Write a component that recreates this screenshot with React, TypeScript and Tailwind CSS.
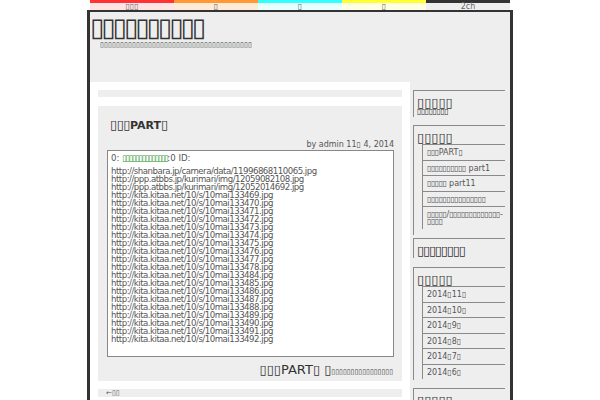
import React from 'react';

const T = (n: number) => '▯'.repeat(n);

const navItems = [
  { label: T(3), bar: 'border-[#ff3333]', bg: 'bg-[#ffe4e4]' },
  { label: T(1), bar: 'border-[#ff9933]', bg: 'bg-[#ffead8]' },
  { label: T(1), bar: 'border-[#33ffff]', bg: 'bg-[#e8ffff]' },
  { label: T(1), bar: 'border-[#ffff33]', bg: 'bg-[#ffffe4]' },
  { label: '2ch', bar: 'border-[#333333]', bg: 'bg-[#eeeeee]' },
];

const urls = [
  'http://shanbara.jp/camera/data/11996868110065.jpg',
  'http://ppp.atbbs.jp/kurimari/img/12059082108.jpg',
  'http://ppp.atbbs.jp/kurimari/img/12052014692.jpg',
  ...['469', '470', '471', '472', '473', '474', '475', '476', '477', '478', '484', '485', '486', '487', '488', '489', '490', '491', '492'].map(
    (n) => `http://kita.kitaa.net/10/s/10mai133${n}.jpg`
  ),
];

// small tofu-like run, squeezed to the width of the reference glyphs
const Tf = ({ n }: { n: number }) => <span className="tracking-[-0.5px]">{T(n)}</span>;

const recent: React.ReactNode[] = [
  <><Tf n={3} />PART<Tf n={1} /></>,
  <><Tf n={10} /> part1</>,
  <><Tf n={5} /> part11</>,
  <Tf n={15} />,
  <span className="break-all"><Tf n={5} />/<Tf n={13} />-<Tf n={4} /></span>,
];

const archives = ['2014▯11▯', '2014▯10▯', '2014▯9▯', '2014▯8▯', '2014▯7▯', '2014▯6▯'];

const Widget = ({ title, height, gap, narrow, children }: { title: string; height: string; gap: string; narrow?: boolean; children?: React.ReactNode }) => (
  <div className={`${height} ${gap} border-l border-t border-[#8a8a8a] pl-[3px]`}>
    <h3 className={`pt-[5px] text-[13px] leading-[13px] text-[#333] ${narrow ? 'tracking-[-1.2px]' : ''}`}>{title}</h3>
    {children}
  </div>
);

const WidgetList = ({ items }: { items: React.ReactNode[] }) => (
  <ul className="ml-[5px] border-l border-[#8a8a8a]">
    {items.map((it, i) => (
      <li key={i} className="border-t border-[#8a8a8a] pb-[3.5px] pl-[4px] pt-[4px] text-[8px] leading-[7px] text-[#555]">
        {it}
      </li>
    ))}
  </ul>
);

export default function App() {
  return (
    <div className="min-h-screen bg-white font-['DejaVu_Sans',sans-serif]">
      <div className="mx-auto w-[426px]">
        <nav className="mx-[3px] grid grid-cols-5">
          {navItems.map((n, i) => (
            <div key={i} className={`border-t-[3px] ${n.bar} ${n.bg} h-[10px] text-center text-[8px] leading-[7px] text-[#666]`}>
              {n.label}
            </div>
          ))}
        </nav>
        <div className="h-[390px] overflow-hidden border-x-[3px] border-t-2 border-[#333] bg-[#eeeeee]">
          <header className="h-[70px]">
            <h1 className="pt-[2px] text-[26px] leading-[26px] tracking-[-3px] text-[#333]">{T(10)}</h1>
            <p className="ml-[10px] mt-[1px] text-[7px] font-bold leading-[8px] tracking-[0.15px] text-[#333]">{T(38)}</p>
          </header>
          <div className="flex">
            <main className="w-[320px] bg-white px-[8px] pt-[8px]">
              <div className="h-[7px] bg-[#eeeeee]" />
              <article className="mt-[9px] bg-[#eeeeee] pb-[5px] pl-[9px] pr-[8px] pt-[12px]">
                <h2 className="pl-[3px] text-[13px] font-bold leading-[13px] text-[#333]">
                  <span className="tracking-[-0.5px]">{T(3)}</span>
                  <span className="text-[11px]">PART</span>
                  <span>{T(1)}</span>
                </h2>
                <div className="mt-[8.5px] text-right text-[8px] leading-[8px] text-[#555]">by admin 11▯ 4, 2014</div>
                <div className="mt-[1.5px] h-[207px] border border-[#888] bg-white px-[3px] pt-[3px] text-[8.6px] leading-[8px] text-[#555]">
                  <div>
                    0: <span className="tracking-[-1.5px] text-[#2f9a2f]">{T(14)}</span>:0 ID:
                  </div>
                  <div className="mt-[5px] tracking-[-0.5px]">
                    {urls.map((u) => (
                      <div key={u}>{u}</div>
                    ))}
                  </div>
                </div>
                <div className="mt-[6px] h-[13px] pr-[1px] text-right text-[13px] leading-[13px] text-[#333]">
                  <span>{T(3)}PART{T(1)} {T(1)}</span>
                  <span className="text-[7px]">{T(16)}</span>
                </div>
              </article>
              <div className="mt-[8px] h-[8px] bg-[#eeeeee] pl-[8px] text-[7px] leading-[8px] text-[#555]">←{T(2)}</div>
            </main>
            <aside className="ml-[3px] mr-[5px] flex-1 pt-[8px]">
              <Widget title={T(5)} height="h-[27px]" gap="mb-[8px]">
                <p className="text-[8px] leading-[6px] text-[#333]"><Tf n={8} /></p>
              </Widget>
              <Widget title={T(5)} height="h-[110px]" gap="mb-[3px]">
                <WidgetList items={recent} />
              </Widget>
              <Widget title={T(8)} height="h-[20px]" gap="mb-[9px]" narrow />
              <Widget title={T(5)} height="h-[113px]" gap="mb-[8px]">
                <WidgetList items={archives} />
              </Widget>
              <Widget title={T(5)} height="h-[20px]" gap="mb-0" />
            </aside>
          </div>
        </div>
      </div>
    </div>
  );
}
